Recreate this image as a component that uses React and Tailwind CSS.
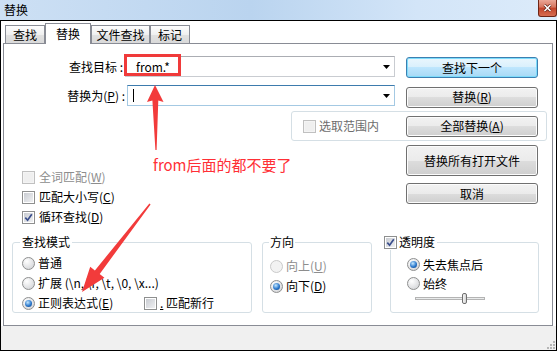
import React from "react";

const classes = {
  root: "relative flex h-[351px] w-[557px] flex-col overflow-hidden bg-white font-['Noto_Sans_CJK_SC',sans-serif] text-[12px] leading-[16px] text-black",
  titleBar: "flex h-[20px] shrink-0 items-start justify-between bg-[linear-gradient(90deg,#cde0f4,#bad4ef_45%,#d3e5f8_75%,#dcebfa)]",
  body: "flex flex-1 flex-col border border-black",
  tab: "flex h-[18px] items-center justify-center border border-b-0 border-[#898c95] bg-[linear-gradient(#fdfdfd,#f0f0f0_50%,#e2e2e2_50%,#d9d9d9)]",
  tabActive: "relative z-10 -mb-px flex h-[21px] items-start justify-center border border-b-0 border-[#898c95] bg-white pt-[2px]",
  panel: "ml-[2px] mr-[3px] flex h-[283px] flex-col border border-[#898c95] pt-[12px]",
  combo: "flex h-[21px] items-center justify-between border bg-white pr-[4px]",
  group: "rounded-[3px] border border-[#d5dfe5]",
  row: "flex h-[20px] items-center",
};

const Key = ({ children }) => <span className="underline underline-offset-1">{children}</span>;

const Check = ({ checked, disabled }) => (
  <span
    className={`flex h-[13px] w-[13px] shrink-0 items-center justify-center border ${
      disabled ? "border-[#c0c0c0] bg-[#f4f4f4]" : "border-[#8e8f8f] bg-white"
    }`}
  >
    <span
      className={`flex h-[9px] w-[9px] items-center justify-center ${
        disabled ? "bg-[#efefef]" : "bg-[linear-gradient(135deg,#c9ccd2,#eff0f2)]"
      }`}
    >
      {checked && (
        <svg width="9" height="9" viewBox="0 0 9 9">
          <path d="M1.3 4.6 L3.6 7.2 L7.8 1.2" fill="none" stroke="#3a4e8c" strokeWidth="1.7" />
        </svg>
      )}
    </span>
  </span>
);

const Radio = ({ checked, disabled }) => (
  <span
    className={`flex h-[13px] w-[13px] shrink-0 items-center justify-center rounded-full border ${
      disabled
        ? "border-[#cacaca] bg-[#f2f2f2]"
        : "border-[#8e8f8f] bg-[radial-gradient(circle_at_35%_30%,#ffffff,#d4d5d8_85%)]"
    }`}
  >
    {checked && (
      <span className="h-[7px] w-[7px] rounded-full bg-[radial-gradient(circle_at_40%_35%,#c4e8ff,#2b78cc_55%,#0d3c7a)]" />
    )}
  </span>
);

const Btn = ({ primary, tall, children }) => (
  <div
    className={`flex w-[132px] shrink-0 items-center justify-center rounded-[3px] border ${
      tall ? "h-[31px]" : "h-[21px]"
    } ${
      primary
        ? "border-[#3c7fb1] bg-[linear-gradient(#eaf6fd,#d9f0fc_50%,#bee6fd_50%,#a7d9f5)] shadow-[inset_0_0_0_1px_#7ddcfb]"
        : "border-[#707070] bg-[linear-gradient(#f2f2f2,#ebebeb_50%,#dddddd_50%,#cfcfcf)] shadow-[inset_0_0_0_1px_#fcfcfc]"
    }`}
  >
    {children}
  </div>
);

const Arrow = () => (
  <svg width="7" height="4" viewBox="0 0 7 4">
    <path d="M0 0 H7 L3.5 4 Z" fill="#000" />
  </svg>
);

export default function App() {
  return (
    <div className={classes.root}>
      {/* title bar */}
      <div className={classes.titleBar}>
        <span className="pl-[4px] pt-[2px] text-[12px] leading-[16px]">替换</span>
        <div className="flex h-[17px] w-[19px] items-center justify-center rounded-b-[3px] border border-t-0 border-[#6e2516] bg-[linear-gradient(#eaa696,#d6745d_45%,#c3432a_50%,#d66c50)]">
          <svg width="9" height="8" viewBox="0 0 9 8">
            <path d="M1.5 1 L7.5 7 M7.5 1 L1.5 7" stroke="#5b2015" strokeWidth="3" />
            <path d="M1.5 1 L7.5 7 M7.5 1 L1.5 7" stroke="#fff" strokeWidth="1.6" />
          </svg>
        </div>
      </div>

      <div className={classes.body}>
        {/* tabs */}
        <div className="flex h-[22px] items-end pl-[4px]">
          <div className={`${classes.tab} w-[40px]`}>查找</div>
          <div className={`${classes.tabActive} w-[46px]`}>替换</div>
          <div className={`${classes.tab} w-[59px]`}>文件查找</div>
          <div className={`${classes.tab} w-[40px]`}>标记</div>
        </div>

        <div className={classes.panel}>
          {/* find */}
          <div className="flex h-[21px] items-center">
            <div className="w-[121px] pr-[2px] text-right">查找目标 :</div>
            <div className={`${classes.combo} w-[270px] border-[#c9ccd1] border-t-[#abadb3] pl-[10px]`}>
              <span>from.*</span>
              <Arrow />
            </div>
            <div className="ml-[11px] mt-[2px]">
              <Btn primary>查找下一个</Btn>
            </div>
          </div>

          {/* replace */}
          <div className="mt-[8px] flex h-[21px] items-center">
            <div className="w-[123px] pr-[2px] text-right">
              替换为(<Key>P</Key>) :
            </div>
            <div className={`${classes.combo} w-[268px] border-[#a4c9e3] border-t-[#3d7bad] pl-[5px]`}>
              <span className="h-[13px] w-px bg-black" />
              <Arrow />
            </div>
            <div className="ml-[11px] mt-[3px]">
              <Btn>
                替换(<Key>R</Key>)
              </Btn>
            </div>
          </div>

          {/* selection group */}
          <div className="mt-[5px] flex">
            <div className={`${classes.group} ml-[287px] flex h-[30px] w-[256px] items-center justify-between pl-[11px] pr-[8px]`}>
              <div className="flex items-center gap-[3px] text-[#6d6d6d]">
                <Check disabled />
                <span>选取范围内</span>
              </div>
              <Btn>
                全部替换(<Key>A</Key>)
              </Btn>
            </div>
          </div>

          {/* options + more buttons */}
          <div className="flex h-[93px]">
            <div className="flex w-[402px] flex-col pl-[18px] pt-[26px]">
              <div className={`${classes.row} gap-[4px] text-[#8d8d8d]`}>
                <Check disabled />
                <span>
                  全词匹配(<Key>W</Key>)
                </span>
              </div>
              <div className={`${classes.row} gap-[4px]`}>
                <Check />
                <span>
                  匹配大小写(<Key>C</Key>)
                </span>
              </div>
              <div className={`${classes.row} gap-[4px]`}>
                <Check checked />
                <span>
                  循环查找(<Key>D</Key>)
                </span>
              </div>
            </div>
            <div className="flex flex-col pt-[4px]">
              <Btn tall>替换所有打开文件</Btn>
              <div className="mt-[7px]">
                <Btn>取消</Btn>
              </div>
            </div>
          </div>

          {/* bottom groups */}
          <div className="flex">
            <fieldset className={`${classes.group} ml-[8px] h-[79px] w-[240px] pl-[7px]`}>
              <legend className="px-[2px] leading-[16px]">查找模式</legend>
              <div className="mt-[3px] pl-[2px]">
                <div className={`${classes.row} gap-[3px]`}>
                  <Radio />
                  <span>普通</span>
                </div>
                <div className={`${classes.row} gap-[3px]`}>
                  <Radio />
                  <span>{"扩展 (\\n, \\r, \\t, \\0, \\x...)"}</span>
                </div>
                <div className={classes.row}>
                  <div className="flex w-[122px] items-center gap-[3px]">
                    <Radio checked />
                    <span>
                      正则表达式(<Key>E</Key>)
                    </span>
                  </div>
                  <Check />
                  <span className="ml-[3px]">
                    <Key>.</Key> 匹配新行
                  </span>
                </div>
              </div>
            </fieldset>

            <fieldset className={`${classes.group} ml-[10px] h-[79px] w-[110px] pl-[6px]`}>
              <legend className="px-[1px] leading-[16px]">方向</legend>
              <div className="mt-[6px] pl-[1px]">
                <div className={`${classes.row} gap-[3px] text-[#8d8d8d]`}>
                  <Radio disabled />
                  <span>
                    向上(<Key>U</Key>)
                  </span>
                </div>
                <div className={`${classes.row} gap-[3px]`}>
                  <Radio checked />
                  <span>
                    向下(<Key>D</Key>)
                  </span>
                </div>
              </div>
            </fieldset>

            <fieldset className={`${classes.group} ml-[18px] h-[79px] w-[149px]`}>
              <legend className="relative -ml-[7px] flex items-center gap-[2px] bg-white pr-[2px] leading-[16px]">
                <Check checked />
                <span>透明度</span>
              </legend>
              <div className="mt-[5px] pl-[16px]">
                <div className="flex h-[19px] items-center gap-[3px]">
                  <Radio checked />
                  <span>失去焦点后</span>
                </div>
                <div className="flex h-[19px] items-center gap-[3px]">
                  <Radio />
                  <span>始终</span>
                </div>
                <div className="relative ml-[8px] mt-[4px] h-[3px] w-[70px] border border-[#b4b4b4] bg-[#e9ebeb]">
                  <span className="absolute -top-[5px] left-[46px] h-[11px] w-[5px] rounded-[2px] border border-[#707070] bg-[linear-gradient(90deg,#f4f4f4,#d6d6d6)]" />
                </div>
              </div>
            </fieldset>
          </div>
        </div>

        {/* status strip */}
        <div className="flex flex-1 items-end justify-end bg-[#f0f0f0] pb-[1px] pr-[1px]">
          <svg width="8" height="8" viewBox="0 0 8 8">
            <g fill="#b6b6b6">
              <rect x="6" y="0" width="2" height="2" />
              <rect x="3" y="3" width="2" height="2" />
              <rect x="6" y="3" width="2" height="2" />
              <rect x="0" y="6" width="2" height="2" />
              <rect x="3" y="6" width="2" height="2" />
              <rect x="6" y="6" width="2" height="2" />
            </g>
          </svg>
        </div>
      </div>

      {/* annotations */}
      <div className="pointer-events-none absolute left-[124px] top-[54px] h-[22px] w-[57px] border-[3px] border-[#f03a3a]" />
      <div className="pointer-events-none absolute left-[153px] top-[155px] text-[15px] leading-[19px] text-[#ff2f36]">
        from后面的都不要了
      </div>
      <svg className="pointer-events-none absolute left-0 top-0" width="557" height="351" viewBox="0 0 557 351">
        <polygon
          points="155,85 163.5,102 158.3,100.5 156.6,150 155.4,150 152.4,100.5 147,102"
          fill="#f23b3b"
        />
        <polygon
          points="82,292 104.4,277.7 99.7,274 150.6,204.4 149.4,203.6 94.9,270.4 90.2,266.7"
          fill="#f23b3b"
        />
      </svg>
    </div>
  );
}
